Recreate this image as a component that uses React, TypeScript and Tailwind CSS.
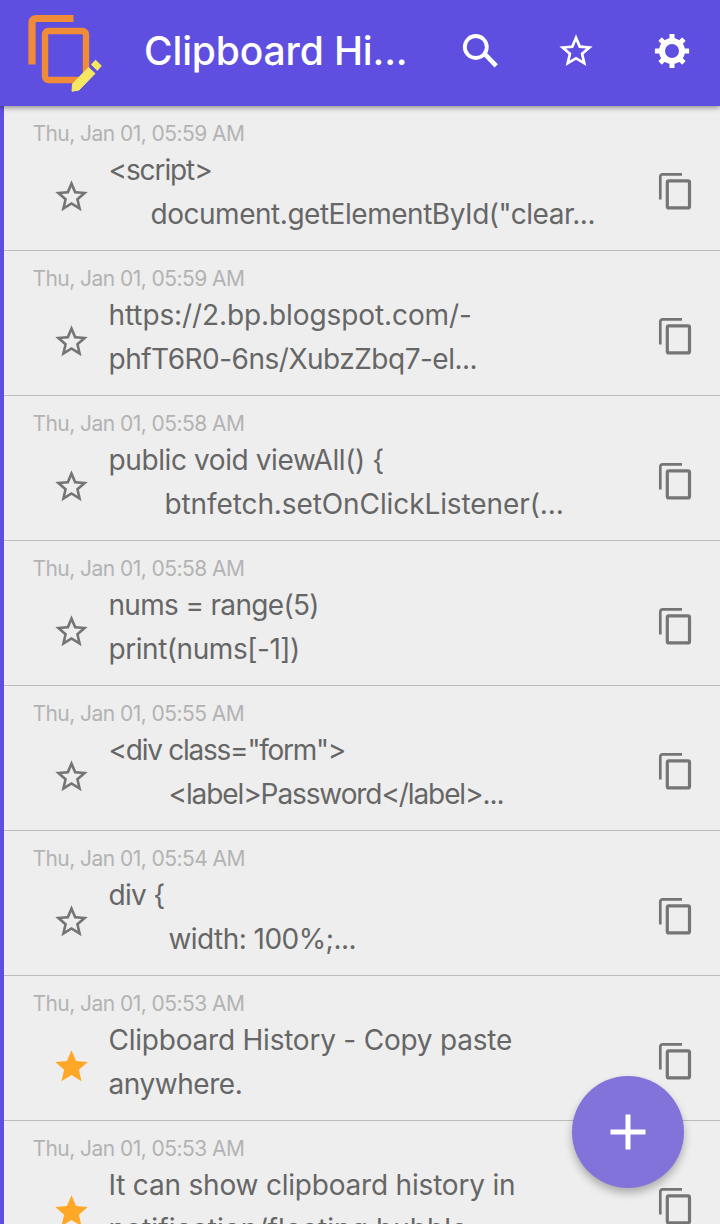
type Line = { text: string; className: string };
type Clip = { time: string; lines: Line[]; starred?: boolean };

const clips: Clip[] = [
  {
    time: "Thu, Jan 01, 05:59 AM",
    lines: [
      { text: "<script>", className: "tracking-[-1.1px]" },
      { text: 'document.getElementById("clear...', className: "pl-[42px] tracking-[-0.47px]" },
    ],
  },
  {
    time: "Thu, Jan 01, 05:59 AM",
    lines: [
      { text: "https://2.bp.blogspot.com/-", className: "tracking-[-0.1px]" },
      { text: "phfT6R0-6ns/XubzZbq7-el...", className: "tracking-[-0.5px]" },
    ],
  },
  {
    time: "Thu, Jan 01, 05:58 AM",
    lines: [
      { text: "public void viewAll() {", className: "tracking-[-0.4px]" },
      { text: "btnfetch.setOnClickListener(...", className: "pl-[56px] tracking-[-0.1px]" },
    ],
  },
  {
    time: "Thu, Jan 01, 05:58 AM",
    lines: [
      { text: "nums = range(5)", className: "tracking-[-0.67px]" },
      { text: "print(nums[-1])", className: "tracking-[-0.45px]" },
    ],
  },
  {
    time: "Thu, Jan 01, 05:55 AM",
    lines: [
      { text: '<div class="form">', className: "tracking-[-1.25px]" },
      { text: "<label>Password</label>...", className: "pl-[60px] tracking-[-1.1px]" },
    ],
  },
  {
    time: "Thu, Jan 01, 05:54 AM",
    lines: [
      { text: "div {", className: "tracking-[-0.7px]" },
      { text: "width: 100%;...", className: "pl-[60px] tracking-[-0.55px]" },
    ],
  },
  {
    time: "Thu, Jan 01, 05:53 AM",
    starred: true,
    lines: [
      { text: "Clipboard History - Copy paste", className: "tracking-[-0.22px]" },
      { text: "anywhere.", className: "tracking-[-0.45px]" },
    ],
  },
  {
    time: "Thu, Jan 01, 05:53 AM",
    starred: true,
    lines: [
      { text: "It can show clipboard history in", className: "tracking-[-0.2px]" },
      { text: "notification/floating bubble.", className: "tracking-[0.1px]" },
    ],
  },
];

const STAR_OUTLINE =
  "M22 9.24l-7.19-.62L12 2 9.19 8.63 2 9.24l5.46 4.73L5.82 21 12 17.27 18.18 21l-1.63-7.03L22 9.24zM12 15.4l-3.76 2.27 1-4.28-3.32-2.88 4.38-.38L12 6.1l1.71 4.04 4.38.38-3.32 2.88 1 4.28L12 15.4z";
const STAR_FILLED =
  "M12 17.27L18.18 21l-1.64-7.03L22 9.24l-7.19-.61L12 2 9.19 8.63 2 9.24l5.46 4.73L5.82 21z";

function Star({ filled, className }: { filled?: boolean; className: string }) {
  return (
    <svg viewBox="0 0 24 24" className={className} fill="currentColor">
      <path d={filled ? STAR_FILLED : STAR_OUTLINE} />
    </svg>
  );
}

function CopyIcon() {
  return (
    <svg viewBox="0 0 40 40" className="h-10 w-10 text-[#757575]" fill="none" stroke="currentColor">
      <path d="M4.3 28.5V5.8Q4.3 3.3 6.8 3.3H26" strokeWidth="2.7" />
      <rect x="11.3" y="9.9" width="22.2" height="27" rx="1.5" strokeWidth="3.2" />
    </svg>
  );
}

function Logo() {
  return (
    <svg viewBox="0 0 90 90" className="h-[90px] w-[90px]" fill="none">
      <path d="M12 56.5V15Q12 10.5 16.5 10.5H53.5" stroke="#f08c38" strokeWidth="7.2" />
      <rect x="25" y="23" width="41" height="49" rx="3.5" stroke="#f08c38" strokeWidth="6.4" />
      <path d="M52.5 76l16-16.5 6.5 6L59 82 52 83.3z" fill="#f6e763" stroke="#f6e763" strokeLinejoin="round" />
      <path d="M71.5 56.5l4-4.3 5.8 5.6-4 4.6z" fill="#f6e763" stroke="#f6e763" strokeLinejoin="round" />
    </svg>
  );
}

function SearchIcon() {
  return (
    <svg viewBox="0 0 48 48" className="h-12 w-12" fill="none" stroke="white">
      <circle cx="19.8" cy="20" r="11" strokeWidth="3.8" />
      <path d="M27 27.2l2 0 11.2 11.6" strokeWidth="4.6" />
    </svg>
  );
}

const TEETH = [0, 45, 90, 135, 180, 225, 270, 315];

function GearIcon() {
  return (
    <svg viewBox="0 0 48 48" className="h-12 w-12" fill="none" stroke="white">
      <circle cx="24" cy="24" r="10" strokeWidth="6" />
      {TEETH.map((angle) => (
        <rect
          key={angle}
          x="21.5"
          y={angle % 90 === 0 ? 6.9 : 7.1}
          width="5"
          height="6"
          rx="0.6"
          fill="white"
          stroke="none"
          transform={`rotate(${angle} 24 24)`}
        />
      ))}
    </svg>
  );
}

function Row({ clip }: { clip: Clip }) {
  return (
    <li className="h-[145px] shrink-0 border-b border-[#bcbcbc] pt-3.5">
      <div className="h-7 pl-[28.5px] text-[21px] leading-7 tracking-[-0.55px] text-[#b3b3b3]">{clip.time}</div>
      <div className="flex items-start">
        <Star
          filled={clip.starred}
          className={`mt-[29px] ml-[47.5px] h-[39px] w-[39px] shrink-0 ${clip.starred ? "text-[#ffa726]" : "text-[#757575]"}`}
        />
        <div className="ml-[18px] w-[540px] text-[28px] leading-[44px] whitespace-nowrap text-[#666666]">
          {clip.lines.map((line) => (
            <div key={line.text} className={line.className}>
              {line.text}
            </div>
          ))}
        </div>
        <div className="mt-[23px] ml-[7.5px]">
          <CopyIcon />
        </div>
      </div>
    </li>
  );
}

export default function App() {
  return (
    <div className="relative flex h-[1224px] w-[720px] flex-col overflow-hidden bg-[#eeeeee] font-['Inter',sans-serif]">
      <header className="z-10 flex h-[106px] shrink-0 items-center bg-[#5f4fe0] shadow-[0_2px_5px_rgba(0,0,0,0.38)]">
        <div className="ml-5">
          <Logo />
        </div>
        <h1 className="ml-[34px] w-[280px] pb-1 text-[39px] leading-[48px] font-medium tracking-[-0.15px] whitespace-nowrap text-white">
          Clipboard Hi...
        </h1>
        <div className="-mt-1 ml-8 flex items-center gap-12 text-white">
          <SearchIcon />
          <div className="flex h-12 w-12 items-center justify-center">
            <Star className="h-[40px] w-[40px]" />
          </div>
          <GearIcon />
        </div>
      </header>
      <ul className="flex min-h-0 flex-1 flex-col overflow-hidden border-l-4 border-[#5f4fe0]">
        {clips.map((clip, i) => (
          <Row key={i} clip={clip} />
        ))}
      </ul>
      <button className="absolute top-[1076px] left-[572px] z-20 flex h-28 w-28 items-center justify-center rounded-full bg-[#8273da] shadow-[0_5px_8px_rgba(0,0,0,0.28)]">
        <svg viewBox="0 0 36 36" className="h-9 w-9" stroke="white" strokeWidth="5">
          <path d="M0.5 18h35M18 0.5v35" />
        </svg>
      </button>
    </div>
  );
}
